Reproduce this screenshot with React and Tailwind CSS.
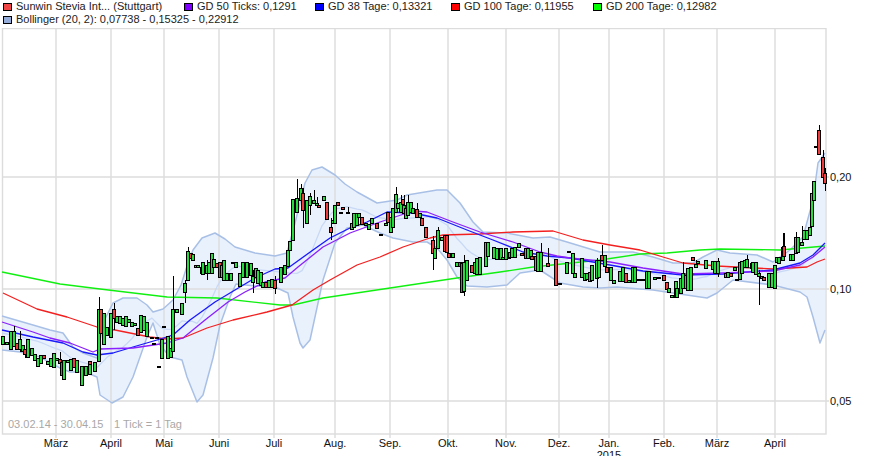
const legendItems = [
  { color: 'bg-[#f04545]', label: 'Sunwin Stevia Int... (Stuttgart)', width: 'w-[181px]' },
  { color: 'bg-[#8000ff]', label: 'GD 50 Ticks: 0,1291', width: 'w-[131px]' },
  { color: 'bg-[#0000ff]', label: 'GD 38 Tage: 0,13321', width: 'w-[136px]' },
  { color: 'bg-[#ff0000]', label: 'GD 100 Tage: 0,11955', width: 'w-[142px]' },
  { color: 'bg-[#00ff00]', label: 'GD 200 Tage: 0,12982', width: 'w-[150px]' },
];

const gridX = [56, 111, 164, 219, 274, 335, 390, 448, 506, 559, 609, 664, 717, 775];
const months = ['März', 'April', 'Mai', 'Juni', 'Juli', 'Aug.', 'Sep.', 'Okt.', 'Nov.', 'Dez.', 'Jan.', 'Feb.', 'März', 'April'];
const prices = [
  { y: 177, label: '0,20' },
  { y: 289, label: '0,10' },
  { y: 401, label: '0,05' },
];

const upper = [[2,316],[33,325],[50,330],[63,333],[73,347],[83,353],[97,358],[103,323],[113,303],[123,298],[137,298],[147,305],[153,312],[163,309],[173,300],[181,285],[188,263],[193,250],[202,238],[215,233],[225,239],[235,247],[255,253],[275,256],[287,253],[295,223],[305,183],[312,170],[322,167],[335,175],[345,184],[357,192],[377,203],[397,200],[407,195],[437,190],[447,190],[460,203],[473,222],[483,232],[507,233],[533,238],[550,237],[567,242],[600,252],[633,252],[653,257],[673,263],[693,263],[703,257],[717,250],[730,253],[757,255],[773,262],[790,250],[803,237],[813,200],[818,163],[825,153]];
const lower = [[2,350],[20,352],[40,357],[60,368],[70,372],[85,372],[97,377],[100,395],[112,403],[123,397],[133,377],[147,337],[153,323],[160,345],[170,357],[182,360],[187,377],[197,402],[203,395],[213,358],[220,325],[230,297],[236,284],[255,286],[275,287],[288,293],[293,317],[300,343],[303,348],[310,340],[323,280],[335,243],[347,228],[363,225],[380,233],[393,238],[413,242],[427,242],[437,248],[447,260],[457,277],[467,286],[487,287],[507,285],[520,273],[540,270],[560,283],[583,287],[600,288],[617,287],[640,289],[653,290],[673,293],[707,298],[717,293],[733,280],[773,285],[800,292],[807,297],[813,317],[820,343],[825,330]];

const ma200 = [[2,272],[60,284],[100,289],[167,297],[217,298],[280,305],[293,305],[323,298],[390,288],[457,278],[500,272],[533,267],[600,260],[640,254],[667,253],[700,250],[720,249],[780,250],[825,246]];
const ma100 = [[3,293],[37,309],[67,317],[97,327],[115,330],[150,337],[167,339],[183,338],[207,328],[233,320],[267,312],[292,305],[313,290],[330,280],[357,265],[380,257],[403,247],[430,238],[443,235],[480,234],[513,232],[553,231],[583,240],[610,245],[640,250],[663,257],[683,263],[717,266],[773,269],[807,267],[817,262],[825,259]];
const ma38 = [[2,330],[33,337],[63,343],[83,352],[97,355],[113,353],[133,347],[157,340],[173,335],[190,320],[215,302],[235,290],[255,278],[275,269],[288,268],[313,250],[330,238],[350,228],[367,222],[387,212],[413,213],[437,218],[467,230],[493,240],[523,252],[547,256],[570,258],[610,265],[643,271],[683,275],[723,274],[773,270],[800,263],[813,255],[825,243]];
const ma50 = [[2,322],[33,332],[50,338],[70,343],[93,352],[100,349],[133,348],[167,343],[183,338],[205,320],[228,302],[245,292],[265,282],[285,278],[298,267],[323,247],[350,233],[380,222],[413,211],[427,212],[453,222],[480,232],[513,242],[540,252],[557,256],[570,258],[610,262],[643,268],[683,274],[723,273],[773,271],[800,265],[813,257],[825,247]];

// x, body top, body bottom, red, wick top, wick bottom
const candles = [
  [3,336,344],[7,342,344],[11,331,349],[14,331,346,0,326],[17,343,349,1],[20,339,349,0,331,352],[23,345,351],[25,349,354,1,349,358],[28,339,357],[32,348,355],[35,354,360],[38,358,366],[41,355,363],[44,355,358,1],[48,361,364],[51,358,366],[54,353,367],[57,358,360],[60,359,363,1,352,368],[62,362,375,1],[64,360,379],[68,360,362],[71,359,370],[74,358,367,1],[77,360,372],[82,366,385],[86,366,375],[90,361,364,1],[90,364,374],[95,362,371],
  [99,309,361,0,297],[101,309,333,1],[104,313,344],[107,327,335],[111,313,337],[114,309,318,1,303,330],[117,316,322],[120,316,323],[123,318,325],[126,316,326],[129,319,322],[132,322,326],[135,323,325],[138,328,335,1],[141,315,332],[144,316,330],[147,322,336],[152,337,338],[157,337,338],[154,343,344],[159,366,367],[164,326,327],[162,339,358],[168,336,358],[171,348,357],[173,309,351,0,276],
  [177,309,312],[182,303,314],[185,283,292,0,280,303],[188,251,280,0,247],[191,253,258,1],[193,254,260],[196,265,267],[198,265,267],[202,267,273,1],[203,262,274],[207,265,273,0,260,280],[209,262,273],[212,253,273],[214,259,267],[217,263,267,1],[220,262,277,1],[222,265,277],[224,260,280],[227,273,280],[231,273,280],[233,262,263],[236,262,267],[240,273,286],[243,262,277],[247,262,277],[251,263,275],[253,276,282,0,270,293],[256,268,277],[258,270,283],[261,272,285],[263,282,287],[266,282,287,1],[269,280,287],[272,279,287],[275,280,288,1,276,294],[281,267,282],[285,265,274],[288,250,266],[290,241,250],[293,199,240],[297,198,212,0,179],[301,188,200,0,184],[303,193,210,1,188,228],[307,200,223],[310,196,205,0,193,215],[314,200,203,0,190],[317,203,205,0,197],[319,205,207,1],[324,196,200],[327,202,219,1],[331,227,232,1,218,240],[333,220,223],[335,205,223],[338,202,205,1],[341,212,213],[343,207,209,1],
  [348,212,213,0,207],[352,223,229],[354,213,227],[357,213,225],[359,213,217],[362,217,224,1],[366,223,225],[369,224,229],[372,218,223],[377,223,228,1],[381,234,235],[386,223,225],[388,212,222,1],[391,217,232],[393,208,227],[396,194,212,0,187],[398,203,208],[401,202,212,0,195],[403,199,204,1],[404,205,213,0,195],[406,208,218],[408,202,215,0,195],[411,202,212],[413,208,213],[417,209,217,1,203],[420,213,217],[422,218,225,1],[426,227,237,1],[433,240,253,1,236,270],[435,248,258],[438,230,248,0,227],[442,237,240],[445,235,251,1],[447,235,252,1],[449,253,257,1],[453,253,257],[457,262,266],[460,262,266,1],[462,263,292,1],[464,262,291,0,255,296],[467,260,280],[472,265,272,1],[475,262,273],[477,258,274],[480,257,274],[486,242,266],[488,242,256],[494,247,258],[497,248,259],[501,248,259],[503,257,259],[506,248,259],
  [509,255,258],[510,252,257],[512,248,257],[515,247,257],[519,243,247],[522,253,255,1],[526,248,258],[528,248,258],[531,250,256],[532,256,259,1],[536,256,270],[538,252,271],[541,252,271,0,243],[548,263,266,1,248],[556,259,285,1],[560,283,284],[567,262,273],[569,251,252],[573,253,273],[575,273,277],[582,258,277],[585,273,280],[587,273,279],[590,272,281],[592,265,280],[597,260,278,0,258,288],[599,260,277],[602,255,260,1,245],[605,255,266],[607,267,272,1],[611,267,280],[614,280,283],[620,271,281],[623,267,281],[626,273,282,1],[629,280,282],[633,267,282],[635,267,282],[639,279,280],[643,279,280],[647,271,288],[649,271,288],[655,277,279],[659,277,278],[664,275,280,1],[667,282,289,1],[669,288,292],[672,295,297],
  [676,281,297],[677,288,297],[681,278,293],[683,273,288,0,262],[686,275,288],[688,268,290],[691,267,290],[693,257,260,1],[696,264,267,0,260],[698,261,263],[706,260,268],[713,261,269],[715,261,273],[718,261,273,0,258,277],[726,273,277],[728,272,277],[731,273,276,1],[735,267,270],[737,279,280],[740,262,279],[742,261,273],[745,260,267],[747,259,267,0,255],[752,263,268],[753,262,272],[756,262,274],[759,273,276,0,270,305],[762,276,278],[764,277,280,1],[769,273,287],[772,273,287],[775,265,288],[777,257,262],[779,257,263],[783,247,260,0,233],[784,246,256,1,233],[791,254,260],[793,254,260],[796,237,253,0,232],[798,237,252],[802,242,245,0,226],[804,230,239],[807,230,239],[810,227,235],[812,193,226],[814,181,200],[816,146,147],[819,130,154,1,125],[823,157,177,1,150],[825,173,183,1,168,191],
];

const toPoints = (line) => line.map(([x, y]) => `${x},${y}`).join(' ');

const interpolate = (line, x) => {
  for (let i = 1; i < line.length; i++) {
    if (x <= line[i][0]) {
      const [x0, y0] = line[i - 1];
      const [x1, y1] = line[i];
      return y0 + ((y1 - y0) * (x - x0)) / (x1 - x0);
    }
  }
  return line[line.length - 1][1];
};

const midline = [];
for (let x = 2; x <= 825; x += 5) {
  midline.push([x, (interpolate(upper, x) + interpolate(lower, x)) / 2]);
}

const labelClass = "font-['Liberation_Sans',sans-serif] text-[11px] fill-[#111111]";
const noteClass = "font-['Liberation_Sans',sans-serif] text-[11px] fill-[#a8a8a8]";

const Chart = () => (
  <svg viewBox="0 28 871 428" className="block h-[428px] w-[871px]">
    <polygon points={toPoints([...upper, ...[...lower].reverse()])} className="fill-[#e9f1fd]" />
    <g className="stroke-[#dcdcdc]" strokeWidth="1.4">
      <rect x="2.5" y="28.5" width="823.5" height="405.5" fill="none" />
      {gridX.map((x) => <line key={x} x1={x} x2={x} y1="28" y2="438" />)}
      {prices.map((p) => <line key={p.y} x1="2" x2="829" y1={p.y} y2={p.y} />)}
    </g>
    <g fill="none" strokeLinejoin="round">
      <polyline points={toPoints(midline)} className="stroke-[#c9d9f5]" strokeWidth="1.3" />
      <polyline points={toPoints(upper)} className="stroke-[#a9c0e6]" strokeWidth="1.5" />
      <polyline points={toPoints(lower)} className="stroke-[#a9c0e6]" strokeWidth="1.5" />
      <polyline points={toPoints(ma200)} className="stroke-[#10f010]" strokeWidth="1.3" />
      <polyline points={toPoints(ma100)} className="stroke-[#f42020]" strokeWidth="1.3" />
      <polyline points={toPoints(ma38)} className="stroke-[#1818ff]" strokeWidth="1.3" />
      <polyline points={toPoints(ma50)} className="stroke-[#8a20ff]" strokeWidth="1.3" />
    </g>
    <g shapeRendering="crispEdges">
      {candles.map(([x, top, bottom, red, wickTop, wickBottom], i) => (
        <g key={i}>
          {(wickTop || wickBottom) && (
            <line x1={x + 0.5} x2={x + 0.5} y1={wickTop || top} y2={wickBottom || bottom} className="stroke-black" />
          )}
          <rect
            x={x - 1.5}
            y={top + 0.5}
            width="3"
            height={bottom - top}
            className={`stroke-black ${red ? 'fill-[#ee3c3c]' : 'fill-[#25dc3c]'}`}
          />
        </g>
      ))}
    </g>
    <text x="8" y="428" className={noteClass}>03.02.14 - 30.04.15</text>
    <text x="114" y="428" className={noteClass}>1 Tick = 1 Tag</text>
    {prices.map((p) => (
      <text key={p.label} x="830" y={p.y + 4} className={labelClass}>{p.label}</text>
    ))}
    {months.map((m, i) => (
      <text key={i} x={gridX[i]} y="447" textAnchor="middle" className={labelClass}>{m}</text>
    ))}
    <text x="609" y="459" textAnchor="middle" className={labelClass}>2015</text>
  </svg>
);

const LegendItem = ({ color, label, width }) => (
  <div className={`flex items-center gap-[4px] ${width}`}>
    <span className={`h-[8px] w-[9px] shrink-0 border border-black ${color}`} />
    <span>{label}</span>
  </div>
);

export default function App() {
  return (
    <div className="h-[456px] w-[871px] overflow-hidden bg-white">
      <div className="h-[28px] pl-[3px] font-['Liberation_Sans',sans-serif] text-[11px] leading-[13px] text-[#222222]">
        <div className="flex h-[13px]">
          {legendItems.map((item) => <LegendItem key={item.label} {...item} />)}
        </div>
        <LegendItem color="bg-[#93acd9]" label="Bollinger (20, 2): 0,07738 - 0,15325 - 0,22912" width="w-[400px]" />
      </div>
      <Chart />
    </div>
  );
}
